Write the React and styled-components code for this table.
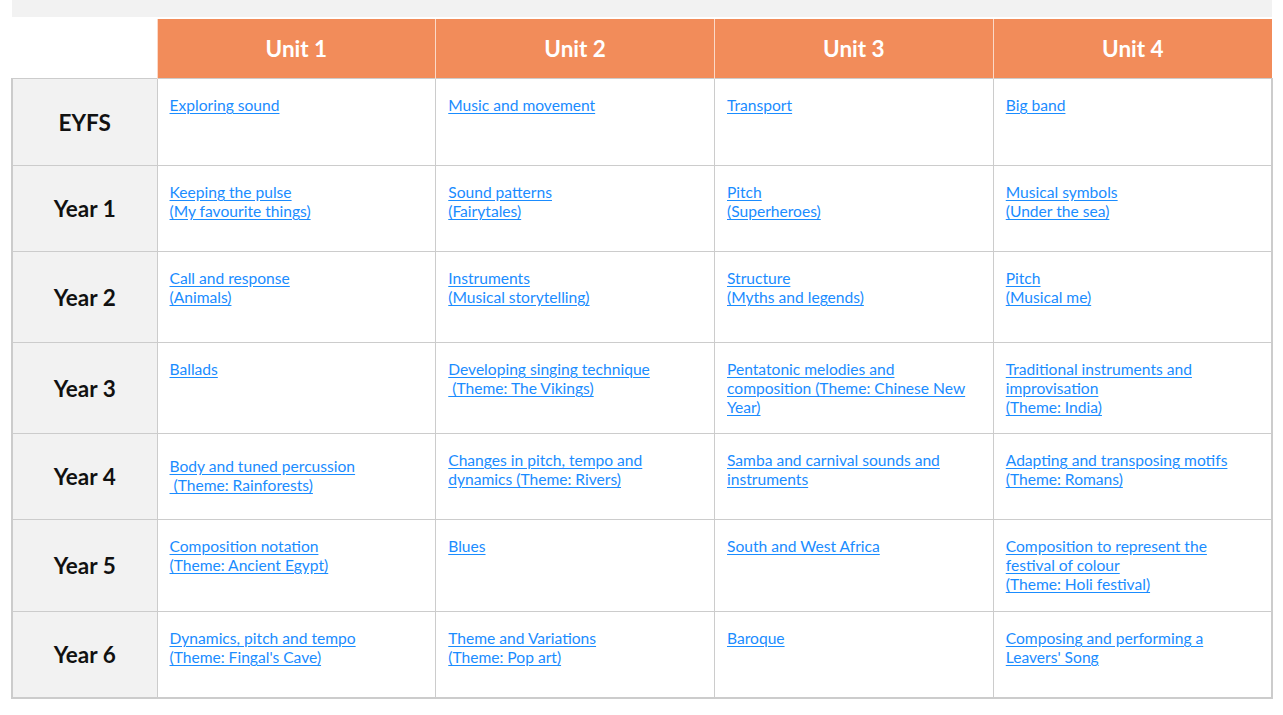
import React from "react";
import styled, { createGlobalStyle } from "styled-components";

const Global = createGlobalStyle`
  html, body { margin: 0; padding: 0; background: #fff; }
  body { font-family: Lato, "Open Sans", Arial, sans-serif; }
`;

const Page = styled.div`
  width: 1283px;
  padding: 0 10px 0 11px;
  box-sizing: border-box;
`;

const TopBar = styled.div`
  height: 17px;
  margin: 0 0 2px 1px;
  width: 1260px;
  background: #f2f2f2;
`;

const Table = styled.table`
  border-collapse: collapse;
  table-layout: fixed;
  width: 1262px;
`;

const HeadCell = styled.th`
  height: 59px;
  padding: 0;
  background: ${(p) => (p.$blank ? "#fff" : "#f28c5a")};
  color: #fff;
  font-size: 22.5px;
  font-weight: 700;
  text-align: center;
  vertical-align: middle;
  border-left: ${(p) => (p.$blank ? "none" : "1px solid #fbd9c8")};
`;

const Row = styled.tr`
  height: ${(p) => p.$h}px;
`;

const Label = styled.th`
  background: #f2f2f2;
  border: 1px solid #cccccc;
  border-left: 2px solid #cccccc;
  border-bottom-width: ${(p) => (p.$last ? 2 : 1)}px;
  font-size: 22.5px;
  font-weight: 700;
  color: #111;
  text-align: center;
  vertical-align: middle;
  padding: 0;
`;

const Cell = styled.td`
  border: 1px solid #cccccc;
  border-right-width: ${(p) => (p.$end ? 2 : 1)}px;
  border-bottom-width: ${(p) => (p.$last ? 2 : 1)}px;
  vertical-align: top;
  padding: ${(p) => 17 + (p.$offset || 0)}px 18px 0 12px;
  font-size: 15.6px;
  line-height: 19px;
`;

const Link = styled.a`
  color: #1a8cff;
  text-decoration: underline;
  text-underline-offset: 2px;
  white-space: pre-line;
`;

const units = ["Unit 1", "Unit 2", "Unit 3", "Unit 4"];

const rows = [
  { label: "EYFS", h: 87, cells: ["Exploring sound", "Music and movement", "Transport", "Big band"] },
  {
    label: "Year 1",
    h: 86,
    cells: [
      "Keeping the pulse\n(My favourite things)",
      "Sound patterns\n(Fairytales)",
      "Pitch\n(Superheroes)",
      "Musical symbols\n(Under the sea)",
    ],
  },
  {
    label: "Year 2",
    h: 91,
    cells: [
      "Call and response\n(Animals)",
      "Instruments\n(Musical storytelling)",
      "Structure\n(Myths and legends)",
      "Pitch\n(Musical me)",
    ],
  },
  {
    label: "Year 3",
    h: 91,
    cells: [
      "Ballads",
      "Developing singing technique\n\u00a0(Theme: The Vikings)",
      "Pentatonic melodies and composition (Theme: Chinese New Year)",
      "Traditional instruments and improvisation\n(Theme: India)",
    ],
  },
  {
    label: "Year 4",
    h: 86,
    cells: [
      { text: "Body and tuned percussion\n\u00a0(Theme: Rainforests)", offset: 6 },
      "Changes in pitch, tempo and dynamics (Theme: Rivers)",
      "Samba and carnival sounds and instruments",
      "Adapting and transposing motifs\n(Theme: Romans)",
    ],
  },
  {
    label: "Year 5",
    h: 92,
    cells: [
      "Composition notation\n(Theme: Ancient Egypt)",
      "Blues",
      "South and West Africa",
      "Composition to represent the festival of colour\n(Theme: Holi festival)",
    ],
  },
  {
    label: "Year 6",
    h: 86,
    cells: [
      "Dynamics, pitch and tempo\n(Theme: Fingal's Cave)",
      "Theme and Variations\n(Theme: Pop art)",
      "Baroque",
      "Composing and performing a Leavers' Song",
    ],
  },
];

export default function App() {
  return (
    <>
      <Global />
      <Page>
        <TopBar />
        <Table>
          <colgroup>
            <col style={{ width: 145 }} />
            <col />
            <col />
            <col />
            <col />
          </colgroup>
          <thead>
            <tr>
              <HeadCell $blank />
              {units.map((u) => (
                <HeadCell key={u}>{u}</HeadCell>
              ))}
            </tr>
          </thead>
          <tbody>
            {rows.map((r, ri) => {
              const last = ri === rows.length - 1;
              return (
                <Row key={r.label} $h={r.h}>
                  <Label $last={last}>{r.label}</Label>
                  {r.cells.map((c, ci) => {
                    const item = typeof c === "string" ? { text: c } : c;
                    return (
                      <Cell key={ci} $end={ci === 3} $last={last} $offset={item.offset}>
                        <Link href="#">{item.text}</Link>
                      </Cell>
                    );
                  })}
                </Row>
              );
            })}
          </tbody>
        </Table>
      </Page>
    </>
  );
}
